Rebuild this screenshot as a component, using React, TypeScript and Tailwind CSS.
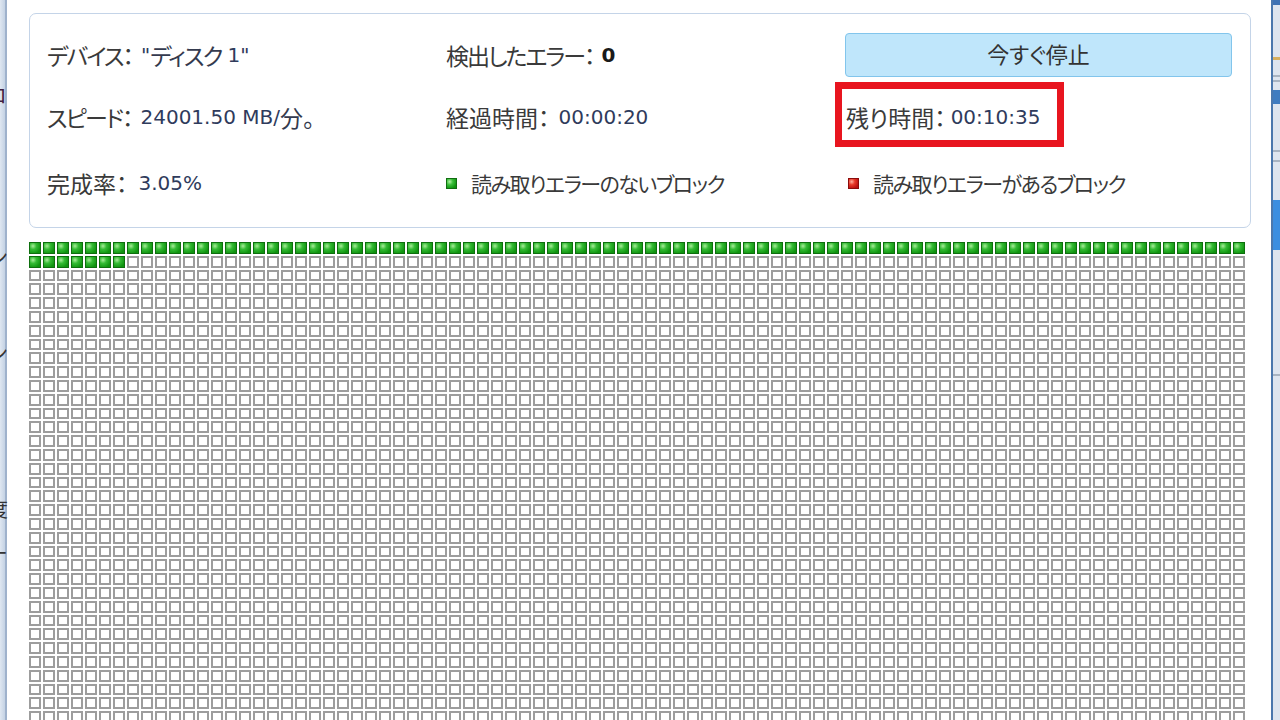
import React from 'react'

const jp = "font-['Noto_Sans_CJK_JP',sans-serif] [font-feature-settings:'palt']"
const latin = "font-['DejaVu_Sans','Noto_Sans_CJK_JP',sans-serif]"

const COLS = 87
const ROWS = 35
const DONE = 94

function Label({ children, tight }: { children: React.ReactNode; tight?: boolean }) {
  return (
    <span className={`${jp} text-[23px] leading-none text-[#3a3a3a] ${tight ? 'tracking-[-2px]' : ''}`}>
      {children}
    </span>
  )
}

function Num({ children, bold }: { children: React.ReactNode; bold?: boolean }) {
  return (
    <span className={`${latin} text-[20px] leading-none ${bold ? 'font-bold text-[#1a1a1a]' : 'text-[#2f3b5c]'}`}>
      {children}
    </span>
  )
}

function Kana({ children, tight }: { children: React.ReactNode; tight?: boolean }) {
  return (
    <span className={`${jp} text-[23px] leading-none text-[#343a4e] ${tight ? 'tracking-[-2px]' : ''}`}>
      {children}
    </span>
  )
}

function Field({
  label,
  children,
  gap,
  tight,
}: {
  label: string
  children: React.ReactNode
  gap: string
  tight?: boolean
}) {
  return (
    <div className="flex items-center whitespace-nowrap">
      <Label tight={tight}>{label}</Label>
      <span className={`${gap} flex items-center`}>{children}</span>
    </div>
  )
}

function LegendSquare({ color }: { color: 'green' | 'red' }) {
  const cls =
    color === 'green'
      ? 'border-[#116d11] bg-[radial-gradient(circle_at_30%_30%,#b4f0a4_0%,#3cc03c_35%,#0f920f_80%)]'
      : 'border-[#8a0c0c] bg-[radial-gradient(circle_at_30%_30%,#ffb0a0_0%,#e83a2a_35%,#b80f0f_80%)]'
  return <span className={`inline-block h-[11px] w-[11px] border ${cls}`} />
}

function Legend({ color, text }: { color: 'green' | 'red'; text: string }) {
  return (
    <div className="flex items-center whitespace-nowrap">
      <LegendSquare color={color} />
      <span className={`${jp} ml-[14px] text-[21px] leading-none tracking-[-1.5px] text-[#3a3a3a]`}>{text}</span>
    </div>
  )
}

function LeftEdge() {
  return (
    <div className="relative h-full w-[10px] shrink-0 overflow-hidden">
      <div className="h-full w-[7px] border-r-2 border-[#9fb2cc] bg-[linear-gradient(90deg,#dfe7f1,#c4d2e4)]" />
      <span className={`${jp} absolute left-[-12px] top-[80px] text-[20px] text-[#402040]`}>コ</span>
      <span className={`${jp} absolute left-[-11px] top-[242px] text-[20px] text-[#333]`}>ン</span>
      <span className={`${jp} absolute left-[-11px] top-[338px] text-[20px] text-[#333]`}>ン</span>
      <span className={`${jp} absolute left-[-12px] top-[494px] text-[20px] text-[#333]`}>度</span>
      <span className={`${jp} absolute left-[-12px] top-[538px] text-[20px] text-[#333]`}>ー</span>
    </div>
  )
}

function RightEdge() {
  return (
    <div className="flex h-full w-[9px] shrink-0 border-l-2 border-[#4b78ad] bg-[#dde5ef]">
      <div className="flex w-full flex-col">
        <div className="h-[5px] bg-[#3d72b4]" />
        <div className="h-[52px]" />
        <div className="h-[3px] bg-[#d6b060]" />
        <div className="h-[15px]" />
        <div className="h-[2px] bg-[#a8b4c2]" />
        <div className="h-[3px]" />
        <div className="h-[2px] bg-[#a8b4c2]" />
        <div className="h-[8px]" />
        <div className="h-[14px] bg-[#3f7cc0]" />
        <div className="h-[46px]" />
        <div className="h-[2px] bg-[#a8b4c2]" />
        <div className="h-[8px]" />
        <div className="h-[2px] bg-[#a8b4c2]" />
        <div className="h-[38px]" />
        <div className="h-[50px] bg-[#3b8ee0]" />
        <div className="h-[124px]" />
        <div className="h-[2px] bg-[#a8b4c2]" />
      </div>
    </div>
  )
}

function Cell({ done }: { done: boolean }) {
  return done ? (
    <div className="h-[11.8px] w-[12px] border border-[#0e6f0e] bg-[radial-gradient(circle_at_30%_30%,#a8ec98_0%,#34bb34_35%,#0f930f_80%)]" />
  ) : (
    <div className="h-[11.8px] w-[12px] border-2 border-[#9d9d9d] bg-white" />
  )
}

export default function App() {
  const cells = Array.from({ length: COLS * ROWS }, (_, i) => i < DONE)

  return (
    <div className="flex h-[720px] w-[1280px] overflow-hidden bg-white">
      <LeftEdge />

      <main className="flex-1 pl-[19px] pt-[13px]">
        <section className="w-[1222px] rounded-[7px] border-[1.5px] border-[#c4d4e8] bg-white pb-[22px] pl-[17px] pt-[19px]">
          <div className="grid grid-cols-[399px_399px_387px]">
            <div className="flex h-[44px] items-center">
              <Field label="デバイス：" gap="ml-[9px]" tight>
                <Num>"</Num>
                <Kana tight>ディスク</Kana>
                <Num>&nbsp;1"</Num>
              </Field>
            </div>
            <div className="flex h-[44px] items-center">
              <Field label="検出したエラー：" gap="ml-[8px]" tight>
                <Num bold>0</Num>
              </Field>
            </div>
            <button
              type="button"
              className="h-[44px] rounded-[4px] border-[1.5px] border-[#82c5ec] bg-[#bfe6fb] text-center"
            >
              <span className={`${jp} text-[22px] leading-none text-[#333]`}>今すぐ停止</span>
            </button>

            <div className="mt-[18px] flex h-[44px] items-center">
              <Field label="スピード：" gap="ml-[9px]" tight>
                <Num>24001.50 MB/</Num>
                <Kana>分。</Kana>
              </Field>
            </div>
            <div className="mt-[18px] flex h-[44px] items-center">
              <Field label="経過時間：" gap="ml-[9px]">
                <Num>00:00:20</Num>
              </Field>
            </div>
            <div className="relative mt-[18px] flex h-[44px] items-center pl-[1px]">
              <Field label="残り時間：" gap="ml-[5px]">
                <Num>00:10:35</Num>
              </Field>
              <div className="pointer-events-none absolute left-[-10px] top-[-13px] h-[65px] w-[229px] border-[7px] border-[#e8151f]" />
            </div>

            <div className="mt-[22px] flex h-[44px] items-center">
              <Field label="完成率：" gap="ml-[11px]">
                <Num>3.05%</Num>
              </Field>
            </div>
            <div className="mt-[22px] flex h-[44px] items-center">
              <Legend color="green" text="読み取りエラーのないブロック" />
            </div>
            <div className="mt-[22px] flex h-[44px] items-center pl-[3px]">
              <Legend color="red" text="読み取りエラーがあるブロック" />
            </div>
          </div>
        </section>

        <div className="mt-[14px] grid grid-cols-[repeat(87,12px)] gap-x-[2px] gap-y-[2px]">
          {cells.map((done, i) => (
            <Cell key={i} done={done} />
          ))}
        </div>
      </main>

      <RightEdge />
    </div>
  )
}
